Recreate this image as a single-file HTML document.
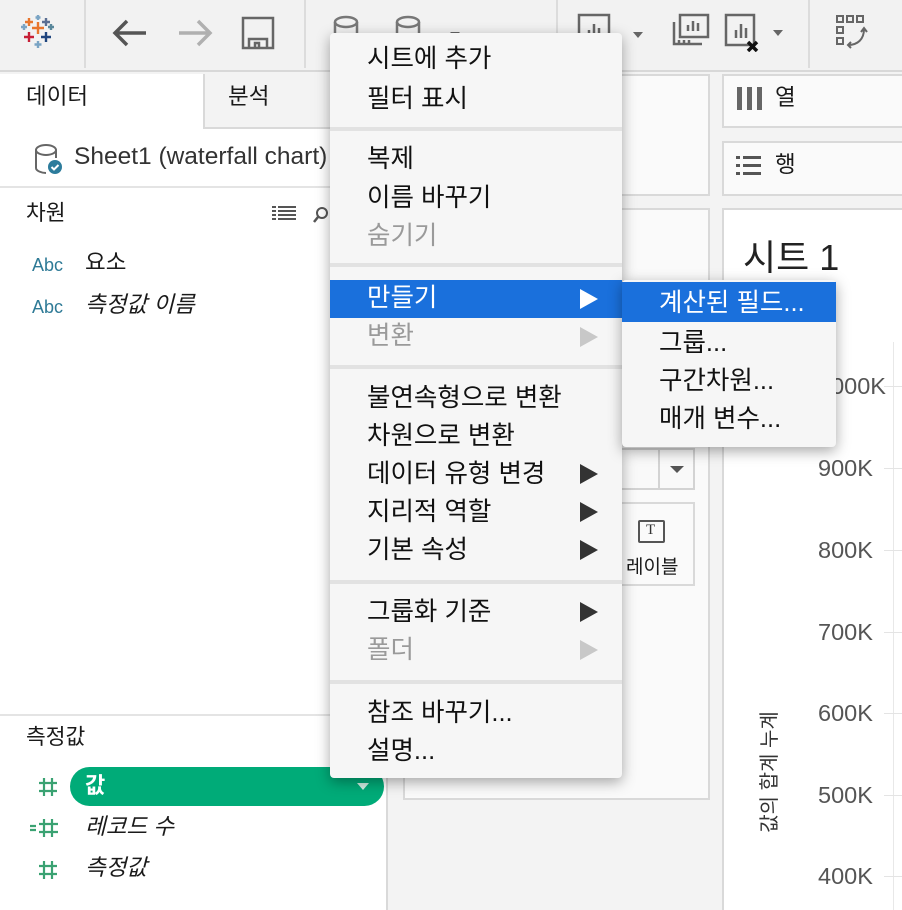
<!DOCTYPE html>
<html><head><meta charset="utf-8"><style>
*{margin:0;padding:0;box-sizing:border-box}
body{width:902px;height:910px;overflow:hidden;position:relative;background:#f3f3f3;font-family:"Liberation Sans","Noto Sans CJK KR",sans-serif;color:#1a1a1a}
.a{position:absolute}
.t{position:absolute;white-space:nowrap;line-height:1}
.menu{position:absolute;background:#f6f6f6;box-shadow:0 4px 14px rgba(0,0,0,.35);border-radius:4px}
.mi{position:absolute;left:37px;font-size:25.5px;line-height:1;white-space:nowrap;color:#111;margin-top:3px}
.dis{color:#9a9a9a}
.sep{position:absolute;left:0;right:0;height:4px;background:#e2e2e2}
.arr{position:absolute;left:250px;width:0;height:0;border-top:10px solid transparent;border-bottom:10px solid transparent;border-left:18px solid #333}
.arr.d{border-left-color:#c8c8c8}
.ax{position:absolute;left:818px;font-size:23.5px;color:#555;line-height:1}
.tick{position:absolute;left:884px;width:18px;height:1px;background:#e4e4e4}
.hash{position:absolute}
</style></head><body>
<div class="a" style="left:0;top:0;width:902px;height:72px;background:#f2f2f2;border-bottom:2px solid #d8d8d8"></div>
<div class="a" style="left:84px;top:0;width:2px;height:68px;background:#dcdcdc"></div>
<div class="a" style="left:304px;top:0;width:2px;height:68px;background:#dcdcdc"></div>
<div class="a" style="left:556px;top:0;width:2px;height:68px;background:#dcdcdc"></div>
<div class="a" style="left:808px;top:0;width:2px;height:68px;background:#dcdcdc"></div>
<svg class="a" style="left:20px;top:14px" width="36" height="36" viewBox="0 0 36 36" stroke-width="2.4">
<path d="M18 8v12M12 14h12" stroke="#e8762d"/><path d="M9 4v8M5 8h8" stroke="#e8762d"/>
<path d="M26 4v8M22 8h8" stroke="#5b6f93"/><path d="M4 10v6M1 13h6" stroke="#7aa4c4"/>
<path d="M31 10v6M28 13h6" stroke="#59879b"/><path d="M9 18v10M4 23h10" stroke="#c72037"/>
<path d="M26 18v10M21 23h10" stroke="#1f457e"/><path d="M18 27v7M14.5 30.5h7" stroke="#7aa4c4"/><path d="M18 1v5M15.5 3.5h5" stroke="#7aa4c4"/>
</svg>
<svg class="a" style="left:110px;top:16px" width="40" height="34" viewBox="0 0 40 34" fill="none" stroke="#555" stroke-width="3.5"><path d="M36 17H6M17 5L5 17l12 12"/></svg>
<svg class="a" style="left:175px;top:16px" width="40" height="34" viewBox="0 0 40 34" fill="none" stroke="#b0b0b0" stroke-width="3.5"><path d="M4 17h30M23 5l12 12-12 12"/></svg>
<svg class="a" style="left:241px;top:16px" width="34" height="34" viewBox="0 0 34 34" fill="none" stroke="#666" stroke-width="2.5"><rect x="2" y="2" width="30" height="30"/><path d="M8 32v-9h18v9M14 32v-5h4v5"/></svg>
<svg class="a" style="left:330px;top:14px" width="220" height="40" viewBox="0 0 220 40" fill="none" stroke="#777" stroke-width="2.5"><ellipse cx="16" cy="8" rx="11" ry="5"/><path d="M5 8v20M27 8v20"/><ellipse cx="78" cy="8" rx="11" ry="5"/><path d="M67 8v20M89 8v20"/><path d="M120 18l5 5 5-5" fill="#666" stroke="none"/></svg>
<svg class="a" style="left:575px;top:12px" width="230" height="40" viewBox="0 0 230 40" fill="none" stroke="#666" stroke-width="2.5">
<rect x="4" y="3" width="30" height="30"/><path d="M14 26v-8M19 26v-14M24 26v-10"/>
<path d="M58 20l5 6 5-6z" fill="#666" stroke="none"/>
<rect x="105" y="3" width="28" height="22"/><path d="M99 10v22h28M113 19v-6M118 19v-10M123 19v-8M104 28v3M109 28v3M114 28v3"/>
<rect x="151" y="3" width="28" height="30"/><path d="M161 26v-8M166 26v-14M171 26v-10"/><path d="M173 30l9 9M182 30l-9 9" stroke="#111" stroke-width="3.5"/>
<path d="M198 18l5 6 5-6z" fill="#666" stroke="none"/></svg>
<svg class="a" style="left:835px;top:14px" width="60" height="40" viewBox="0 0 60 40" fill="none" stroke="#666" stroke-width="2"><rect x="2" y="2" width="6" height="6"/><rect x="12" y="2" width="6" height="6"/><rect x="22" y="2" width="6" height="6"/><rect x="2" y="13" width="6" height="6"/><rect x="2" y="24" width="6" height="6"/><path d="M13 31c10 0 16-6 16-16M26 18l3-4 3 4M16 28l-3 3 3 3"/></svg>

<div class="a" style="left:0;top:74px;width:388px;height:836px;background:#fff;border-right:2px solid #d9d9d9"></div>
<div class="a" style="left:203px;top:74px;width:185px;height:55px;background:#f3f3f3;border-left:2px solid #d9d9d9;border-bottom:2px solid #d9d9d9"></div>
<div class="t" style="left:26px;top:86px;font-size:22.5px">데이터</div>
<div class="t" style="left:228px;top:86px;font-size:22.5px">분석</div>
<svg class="a" style="left:34px;top:143px" width="30" height="32" viewBox="0 0 30 32" fill="none"><ellipse cx="12" cy="7" rx="10" ry="5" stroke="#666" stroke-width="2"/><path d="M2 7v18c0 3 6 5 10 5" stroke="#666" stroke-width="2"/><path d="M22 7v8" stroke="#666" stroke-width="2"/><circle cx="21" cy="24" r="7" fill="#2d7c9c"/><path d="M17.5 24l2.5 2.5 4.5-4.5" stroke="#fff" stroke-width="2"/></svg>
<div class="t" style="left:74px;top:145px;font-size:24.5px;color:#333">Sheet1 (waterfall chart)</div>
<div class="a" style="left:0;top:186px;width:388px;height:2px;background:#e4e4e4"></div>
<div class="t" style="left:26px;top:203px;font-size:21.5px">차원</div>
<svg class="a" style="left:272px;top:206px" width="60" height="20" viewBox="0 0 60 20" fill="#555"><rect x="0" y="0" width="4" height="2"/><rect x="6" y="0" width="18" height="2"/><rect x="0" y="4" width="4" height="2"/><rect x="6" y="4" width="18" height="2"/><rect x="0" y="8" width="4" height="2"/><rect x="6" y="8" width="18" height="2"/><rect x="0" y="12" width="4" height="2"/><rect x="6" y="12" width="18" height="2"/><circle cx="50" cy="7" r="5" fill="none" stroke="#555" stroke-width="2"/><path d="M46 11l-4 5" stroke="#555" stroke-width="2.5"/></svg>
<div class="t" style="left:32px;top:256px;font-size:18px;color:#2e7a96">Abc</div>
<div class="t" style="left:85px;top:252px;font-size:22.5px">요소</div>
<div class="t" style="left:32px;top:298px;font-size:18px;color:#2e7a96">Abc</div>
<div class="t" style="left:85px;top:294px;font-size:22.5px;font-style:italic">측정값 이름</div>
<div class="a" style="left:0;top:714px;width:388px;height:2px;background:#e4e4e4"></div>
<div class="t" style="left:26px;top:727px;font-size:21.5px">측정값</div>
<svg class="hash" style="left:38px;top:777px" width="20" height="20" viewBox="0 0 20 20" stroke="#3aa272" stroke-width="2.2"><path d="M6 1v18M14 1v18M1 6h18M1 14h18"/></svg>
<div class="a" style="left:70px;top:767px;width:314px;height:39px;border-radius:20px;background:#00ab78"></div>
<div class="t" style="left:85px;top:775px;font-size:22px;color:#fff;font-weight:bold">값</div>
<div class="a" style="left:357px;top:783px;border-left:6px solid transparent;border-right:6px solid transparent;border-top:7px solid #d0efe3"></div>
<svg class="hash" style="left:29px;top:818px" width="30" height="20" viewBox="0 0 30 20" stroke="#3aa272" stroke-width="2.2"><path d="M1 8h6M1 12h6M15 1v18M23 1v18M10 6h19M10 14h19"/></svg>
<div class="t" style="left:85px;top:816px;font-size:22.5px;font-style:italic">레코드 수</div>
<svg class="hash" style="left:38px;top:860px" width="20" height="20" viewBox="0 0 20 20" stroke="#3aa272" stroke-width="2.2"><path d="M6 1v18M14 1v18M1 6h18M1 14h18"/></svg>
<div class="t" style="left:85px;top:857px;font-size:22.5px;font-style:italic">측정값</div>

<div class="a" style="left:403px;top:74px;width:307px;height:122px;background:#fafafa;border:2px solid #d9d9d9"></div>
<div class="a" style="left:403px;top:208px;width:307px;height:592px;background:#fafafa;border:2px solid #d9d9d9"></div>
<div class="a" style="left:440px;top:448px;width:255px;height:42px;border:2px solid #d3d3d3;background:#f9f9f9"></div>
<div class="a" style="left:658px;top:450px;width:2px;height:38px;background:#d3d3d3"></div>
<div class="a" style="left:670px;top:466px;border-left:7px solid transparent;border-right:7px solid transparent;border-top:7px solid #555"></div>
<div class="a" style="left:440px;top:502px;width:255px;height:84px;border:2px solid #d9d9d9"></div>
<div class="a" style="left:638px;top:520px;width:27px;height:23px;border:2px solid #555;border-radius:2px"></div>
<div class="t" style="left:646px;top:523px;font-size:15px;font-family:'Liberation Serif',serif;color:#333">T</div>
<div class="t" style="left:626px;top:558px;font-size:19px">레이블</div>

<div class="a" style="left:722px;top:74px;width:180px;height:54px;background:#fafafa;border:2px solid #d9d9d9;border-right:none"></div>
<div class="a" style="left:722px;top:141px;width:180px;height:55px;background:#fafafa;border:2px solid #d9d9d9;border-right:none"></div>
<div class="a" style="left:737px;top:87px;width:5px;height:23px;background:#666"></div><div class="a" style="left:747px;top:87px;width:5px;height:23px;background:#666"></div><div class="a" style="left:757px;top:87px;width:5px;height:23px;background:#666"></div>
<div class="t" style="left:775px;top:87px;font-size:22.5px">열</div>
<svg class="a" style="left:736px;top:155px" width="26" height="22" viewBox="0 0 26 22" fill="#555"><rect x="0" y="1" width="4" height="3"/><rect x="7" y="1" width="18" height="3"/><rect x="0" y="9" width="4" height="3"/><rect x="7" y="9" width="18" height="3"/><rect x="0" y="17" width="4" height="3"/><rect x="7" y="17" width="18" height="3"/></svg>
<div class="t" style="left:775px;top:154px;font-size:22.5px">행</div>
<div class="a" style="left:722px;top:208px;width:180px;height:702px;background:#fff;border-left:2px solid #d9d9d9;border-top:2px solid #d9d9d9"></div>
<div class="t" style="left:743px;top:240px;font-size:36px;color:#222">시트 1</div>
<div class="a" style="left:893px;top:342px;width:1px;height:568px;background:#e8e8e8"></div>
<div class="ax" style="top:375px">1000K</div><div class="tick" style="top:386px"></div>
<div class="ax" style="top:457px">900K</div><div class="tick" style="top:468px"></div>
<div class="ax" style="top:539px">800K</div><div class="tick" style="top:550px"></div>
<div class="ax" style="top:621px">700K</div><div class="tick" style="top:632px"></div>
<div class="ax" style="top:702px">600K</div><div class="tick" style="top:713px"></div>
<div class="ax" style="top:784px">500K</div><div class="tick" style="top:795px"></div>
<div class="ax" style="top:865px">400K</div><div class="tick" style="top:876px"></div>
<div class="t" style="left:700px;top:762px;width:140px;text-align:center;font-size:20px;color:#333;transform:rotate(-90deg)">값의 합계 누계</div>

<div class="menu" style="left:330px;top:33px;width:292px;height:745px">
<div class="mi" style="top:11px">시트에 추가</div>
<div class="mi" style="top:51px">필터 표시</div>
<div class="sep" style="top:94px"></div>
<div class="mi" style="top:111px">복제</div>
<div class="mi" style="top:150px">이름 바꾸기</div>
<div class="mi dis" style="top:188px">숨기기</div>
<div class="sep" style="top:230px"></div>
<div class="a" style="left:0;top:247px;width:292px;height:38px;background:#1a70dc"></div>
<div class="mi" style="top:250px;color:#fff">만들기</div>
<div class="arr" style="top:256px;border-left-color:#fff"></div>
<div class="mi dis" style="top:288px">변환</div>
<div class="arr d" style="top:294px"></div>
<div class="sep" style="top:332px"></div>
<div class="mi" style="top:350px">불연속형으로 변환</div>
<div class="mi" style="top:388px">차원으로 변환</div>
<div class="mi" style="top:426px">데이터 유형 변경</div><div class="arr" style="top:431px"></div>
<div class="mi" style="top:464px">지리적 역할</div><div class="arr" style="top:469px"></div>
<div class="mi" style="top:502px">기본 속성</div><div class="arr" style="top:507px"></div>
<div class="sep" style="top:547px"></div>
<div class="mi" style="top:564px">그룹화 기준</div><div class="arr" style="top:569px"></div>
<div class="mi dis" style="top:602px">폴더</div><div class="arr d" style="top:607px"></div>
<div class="sep" style="top:647px"></div>
<div class="mi" style="top:665px">참조 바꾸기...</div>
<div class="mi" style="top:703px">설명...</div>
</div>
<div class="menu" style="left:622px;top:280px;width:214px;height:167px">
<div class="a" style="left:0;top:2px;width:214px;height:40px;background:#1a70dc"></div>
<div class="mi" style="top:8px;color:#fff">계산된 필드...</div>
<div class="mi" style="top:48px">그룹...</div>
<div class="mi" style="top:86px">구간차원...</div>
<div class="mi" style="top:124px">매개 변수...</div>
</div>
</body></html>
